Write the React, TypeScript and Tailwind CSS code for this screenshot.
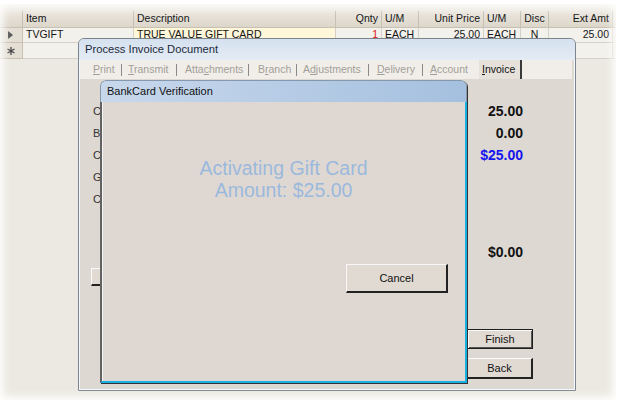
import React from "react";

const cols = [
  { label: "Item", w: "w-[111px]", align: "justify-start" },
  { label: "Description", w: "w-[202px]", align: "justify-start" },
  { label: "Qnty", w: "w-[46px]", align: "justify-end" },
  { label: "U/M", w: "w-[37px]", align: "justify-start" },
  { label: "Unit Price", w: "w-[65px]", align: "justify-end" },
  { label: "U/M", w: "w-[37px]", align: "justify-start" },
  { label: "Disc", w: "w-[28px]", align: "justify-center" },
  { label: "Ext Amt", w: "w-[64px]", align: "justify-end" },
];

const row1 = ["TVGIFT", "TRUE VALUE GIFT CARD", "1", "EACH", "25.00", "EACH", "N", "25.00"];

const tabs = [
  { pre: "", key: "P", post: "rint", w: "w-[28px]", gap: "mr-[6px]" },
  { pre: "", key: "T", post: "ransmit", w: "w-[48px]", gap: "mr-[8px]" },
  { pre: "Atta", key: "c", post: "hments", w: "w-[63px]", gap: "mr-[9px]" },
  { pre: "B", key: "r", post: "anch", w: "w-[38px]", gap: "mr-[6px]" },
  { pre: "A", key: "d", post: "justments", w: "w-[65px]", gap: "mr-[8px]" },
  { pre: "", key: "D", post: "elivery", w: "w-[45px]", gap: "mr-[7px]" },
];

function Grid() {
  return (
    <div className="pt-[11px] text-[10.5px] text-[#151515]">
      {/* header */}
      <div className="flex h-[17px]">
        <div className="w-[23px] border-r border-b border-[#c8c1b3] bg-gradient-to-b from-[#ece8e0] to-[#dcd6ca]" />
        {cols.map((c, i) => (
          <div
            key={i}
            className={`${c.w} ${c.align} flex items-center px-[3px] border-r border-b border-[#c8c1b3] bg-gradient-to-b from-[#ece8e0] to-[#dcd6ca]`}
          >
            {c.label}
          </div>
        ))}
        <div className="flex-1 border-b border-[#c8c1b3] bg-gradient-to-b from-[#ece8e0] to-[#dcd6ca]" />
      </div>
      {/* row 1 */}
      <div className="flex h-[15px]">
        <div className="w-[23px] flex items-center pl-[8px] border-r border-b border-[#c8c1b3] bg-[#e4dfd5]">
          <svg width="5" height="8" viewBox="0 0 5 8">
            <path d="M0 0 L5 4 L0 8 Z" fill="#555" />
          </svg>
        </div>
        {cols.map((c, i) => (
          <div
            key={i}
            className={`${c.w} ${c.align} flex items-center px-[3px] border-r border-b border-[#d6d1c8] ${
              i === 1 ? "bg-[#fff7d9]" : "bg-[#f3f1ec]"
            } ${i === 2 ? "text-[#e01010]" : ""}`}
          >
            {row1[i]}
          </div>
        ))}
        <div className="flex-1 border-b border-[#d6d1c8]" />
      </div>
      {/* row 2 (new row) */}
      <div className="flex h-[16px]">
        <div className="w-[23px] flex items-center pl-[7px] border-r border-b border-[#c8c1b3] bg-[#e4dfd5]">
          <svg width="8" height="8" viewBox="0 0 8 8" stroke="#444" strokeWidth="1.3">
            <path d="M4 0 V8 M0.5 2 L7.5 6 M0.5 6 L7.5 2" />
          </svg>
        </div>
        {cols.map((c, i) => (
          <div key={i} className={`${c.w} border-r border-b border-[#d6d1c8] bg-[#f3f1ec]`} />
        ))}
        <div className="flex-1 border-b border-[#d6d1c8]" />
      </div>
    </div>
  );
}

function WinButton({ label, main }: { label: string; main?: boolean }) {
  return (
    <div
      className={`w-[66px] flex items-center justify-center bg-[#e0dad3] text-[11px] text-[#111] ${
        main
          ? "h-[20px] border border-[#1e1e1e] shadow-[inset_1px_1px_0_#fafafa,inset_-1px_-1px_0_#555]"
          : "h-[21px] border-t border-l border-t-[#fbfbfb] border-l-[#fbfbfb] border-r-2 border-b-2 border-r-[#222] border-b-[#222]"
      }`}
    >
      {label}
    </div>
  );
}

function InvoiceWindow() {
  const labels = ["Cash Sale", "Balance", "Charge", "Gift Card", "Check"];
  const values = ["25.00", "0.00", "$25.00", "", ""];
  return (
    <div className="absolute left-[78px] top-[38px] w-[498px] h-[353px] flex flex-col rounded-t-[6px] border border-[#7c848e] bg-[#ded8d2] overflow-hidden shadow-[inset_1px_0_0_#f4f8fc,inset_-1px_0_0_#f4f8fc,inset_0_-1px_0_#f4f8fc]">
      <div className="h-[21px] flex items-center pl-[6px] bg-gradient-to-b from-[#d5e1ef] to-[#e4ecf5] text-[11.2px] text-[#1c2a3a]">
        Process Invoice Document
      </div>
      <div className="ml-[1px] mr-[3px] h-[19px] flex items-center pl-[13px] bg-[#f1eee9] text-[10.5px] text-[#a29e98]">
        {tabs.map((t, i) => (
          <React.Fragment key={i}>
            <span className={t.w}>
              {t.pre}
              <span className="underline">{t.key}</span>
              {t.post}
            </span>
            <span className={`w-px h-[12px] bg-[#8a8a8a] ${t.gap}`} />
          </React.Fragment>
        ))}
        <span className="w-[49px]">
          <span className="underline">A</span>ccount
        </span>
        <div className="h-full w-[43px] flex items-center pl-[3px] bg-[#e6e1da] border-r-2 border-[#3a3a3a] text-[#111]">
          <span className="underline">I</span>nvoice
        </div>
      </div>
      <div className="flex flex-col pt-[21px] pl-[14px] pr-[42px]">
        {labels.map((l, i) => (
          <div key={i} className="h-[22px] flex items-center justify-between pr-[10px]">
            <span className="text-[11px] text-[#333]">{l}</span>
            <span className={`text-[14px] font-bold ${i === 2 ? "text-[#1414ee]" : "text-[#111]"}`}>{values[i]}</span>
          </div>
        ))}
        <div className="mt-[31px] h-[22px] flex items-center justify-end pr-[10px] text-[14px] font-bold text-[#111]">
          $0.00
        </div>
        <div className="mt-[5px] -ml-[2px] w-[70px] h-[18px] bg-[#e0dad3] border-t border-l border-[#fbfbfb] border-b-2 border-b-[#222]" />
        <div className="mt-[43px] self-end flex flex-col gap-[9px]">
          <WinButton label="Finish" main />
          <WinButton label="Back" />
        </div>
      </div>
    </div>
  );
}

function BankCardDialog() {
  return (
    <div className="absolute left-[100px] top-[80px] w-[367px] h-[303px] flex flex-col rounded-t-[6px] overflow-hidden shadow-[1px_1px_0_#333]">
      <div className="h-[22px] flex items-center pl-[6px] rounded-t-[6px] border-t border-x border-[#8598ae] bg-gradient-to-r from-[#c8d8ec] to-[#a5c0df] text-[11px] text-[#111]">
        BankCard Verification
      </div>
      <div className="flex-1 flex flex-col bg-[#dfd8d2] border-l-2 border-l-[#626262] border-r-2 border-r-[#18b0e2] border-b-2 border-b-[#18b0e2] shadow-[inset_1px_0_0_#f2f2f2]">
        <div className="pt-[55px] text-center text-[19.5px] leading-[22px] text-[#9bb9dd]">
          <div>Activating Gift Card</div>
          <div>Amount: $25.00</div>
        </div>
        <div className="mt-[63px] mr-[17px] self-end w-[102px] h-[29px] flex items-center justify-center bg-[#e0dad3] text-[11px] text-[#111] border-t border-l border-t-[#f7f7f7] border-l-[#f7f7f7] border-r-2 border-b-2 border-r-[#222] border-b-[#222]">
          Cancel
        </div>
      </div>
    </div>
  );
}

export default function App() {
  return (
    <div className="relative w-[623px] h-[408px] overflow-hidden bg-[#ece9e2] font-['Liberation_Sans',Arial,sans-serif]">
      <Grid />
      <InvoiceWindow />
      <BankCardDialog />
      {/* soft feathered edge of the screenshot */}
      <div className="pointer-events-none absolute left-0 top-[4px] w-[616px] h-[396px] shadow-[0_0_0_40px_#ffffff,inset_0_0_8px_3px_#ffffff]" />
    </div>
  );
}
